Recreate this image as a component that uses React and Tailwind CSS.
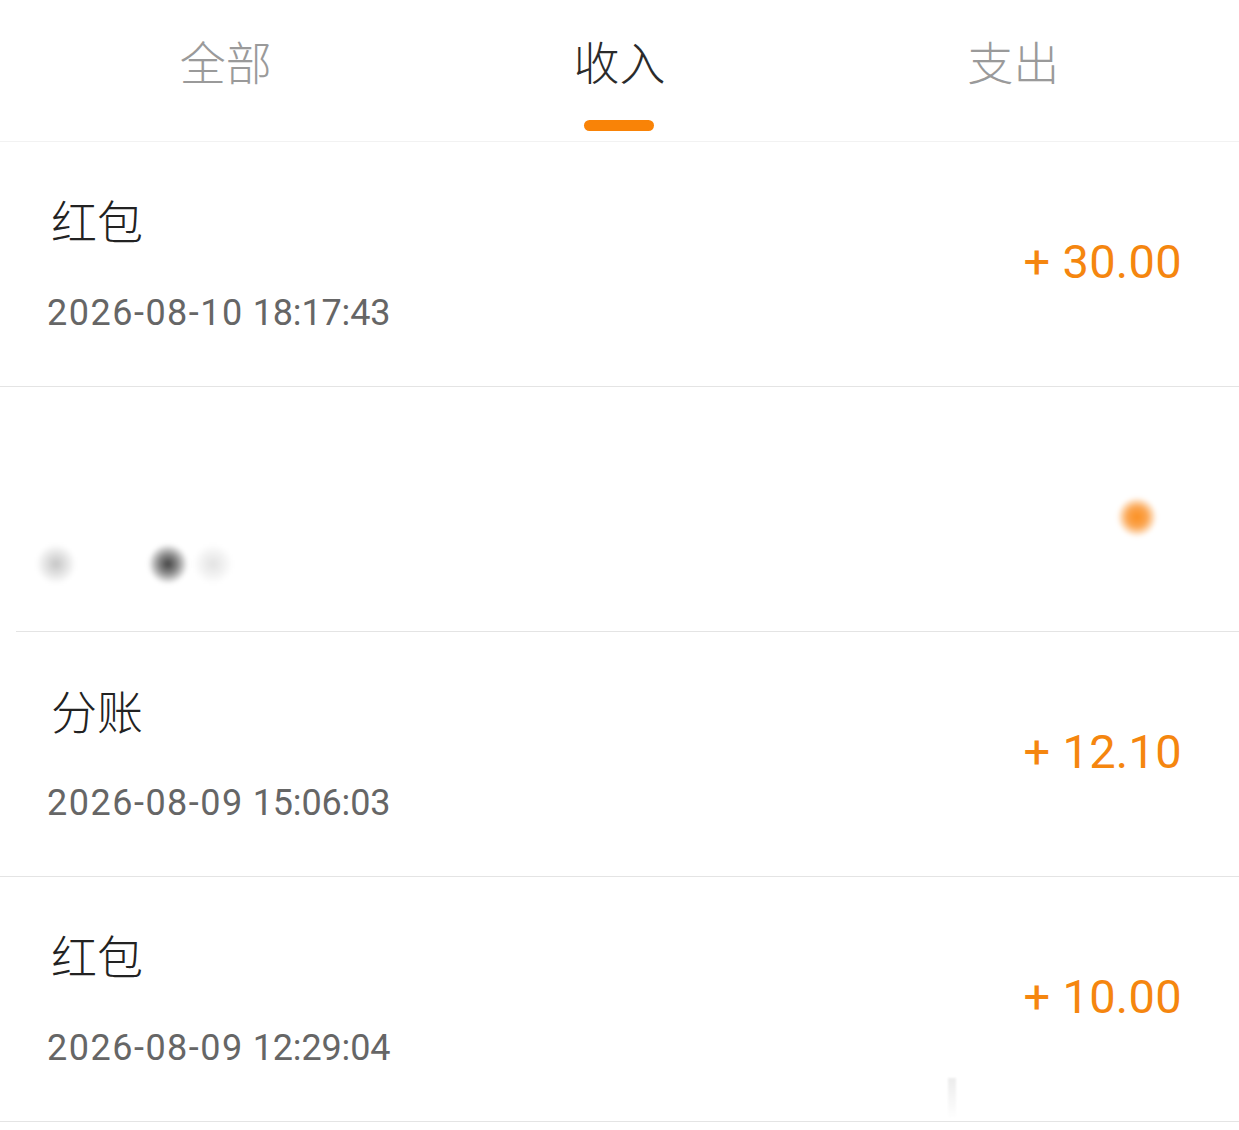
const tabs = [
  { label: "全部", color: "text-[#9a9a9a]" },
  { label: "收入", color: "text-[#2b2b2b]", active: true },
  { label: "支出", color: "text-[#9a9a9a]" },
];

function Dot({ className }) {
  return <span className={`block blur-[2px] ${className}`}></span>;
}

function Row({ title, date, time, amount }) {
  return (
    <div className="h-[245px] border-b border-[#e4e4e4] pl-[47px] pr-[57px] flex items-center justify-between">
      <div className="-mt-[1px]">
        <div className="h-[50px] pl-[4px] leading-[50px] text-[46px] text-[#222222] font-light">{title}</div>
        <div className="mt-[49px] h-[40px] leading-[40px] text-[36px] text-[#666666] font-['Roboto',sans-serif]">
          <span className="tracking-[1.5px]">{date}</span> <span className="tracking-[-0.15px]">{time}</span>
        </div>
      </div>
      <div className="text-[47px] leading-[50px] text-[#f5860f] font-['Roboto',sans-serif] tracking-[0.3px] -mt-[4px]">{amount}</div>
    </div>
  );
}

function App() {
  return (
    <div className="relative w-[1239px] h-[1130px] overflow-hidden bg-white font-['Noto_Sans_CJK_SC','Noto_Sans',sans-serif]">
      {/* Tabs */}
      <div className="h-[142px] border-b border-[#f2f2f2] px-[29px] grid grid-cols-3">
        {tabs.map((t) => (
          <div key={t.label} className="flex flex-col items-center">
            <div className={`mt-[32px] h-[56px] leading-[56px] text-[46px] font-light ${t.color}`}>{t.label}</div>
            {t.active && <div className="mt-[32px] w-[70px] h-[11px] rounded-full bg-[#f98307]"></div>}
          </div>
        ))}
      </div>

      <Row title="红包" date="2026-08-10" time="18:17:43" amount="+ 30.00" />

      {/* Blurred entry */}
      <div className="h-[245px] ml-[16px] border-b border-[#e4e4e4] flex justify-between">
        <div className="flex items-center h-fit mt-[157px] ml-[20px]">
          <Dot className="w-[40px] h-[40px] bg-[radial-gradient(closest-side,#c4c4c4_0%,#dedede_45%,#ffffff_100%)]" />
          <Dot className="ml-[72px] w-[40px] h-[40px] bg-[radial-gradient(closest-side,#3f3f3f_0%,#8f8f8f_50%,#ffffff_100%)]" />
          <Dot className="ml-[5px] w-[40px] h-[40px] bg-[radial-gradient(closest-side,#e2e2e2_0%,#f0f0f0_50%,#ffffff_100%)]" />
        </div>
        <Dot className="mt-[110px] mr-[82px] w-[40px] h-[40px] bg-[radial-gradient(closest-side,#fb8f1f_0%,#fba653_50%,#ffffff_100%)]" />
      </div>

      <Row title="分账" date="2026-08-09" time="15:06:03" amount="+ 12.10" />
      <Row title="红包" date="2026-08-09" time="12:29:04" amount="+ 10.00" />

      {/* faint smudge above the last line */}
      <div className="absolute left-[948px] top-[1078px] w-[8px] h-[40px] bg-gradient-to-b from-[#ececec] to-white blur-[1px]"></div>
    </div>
  );
}

export default App;
